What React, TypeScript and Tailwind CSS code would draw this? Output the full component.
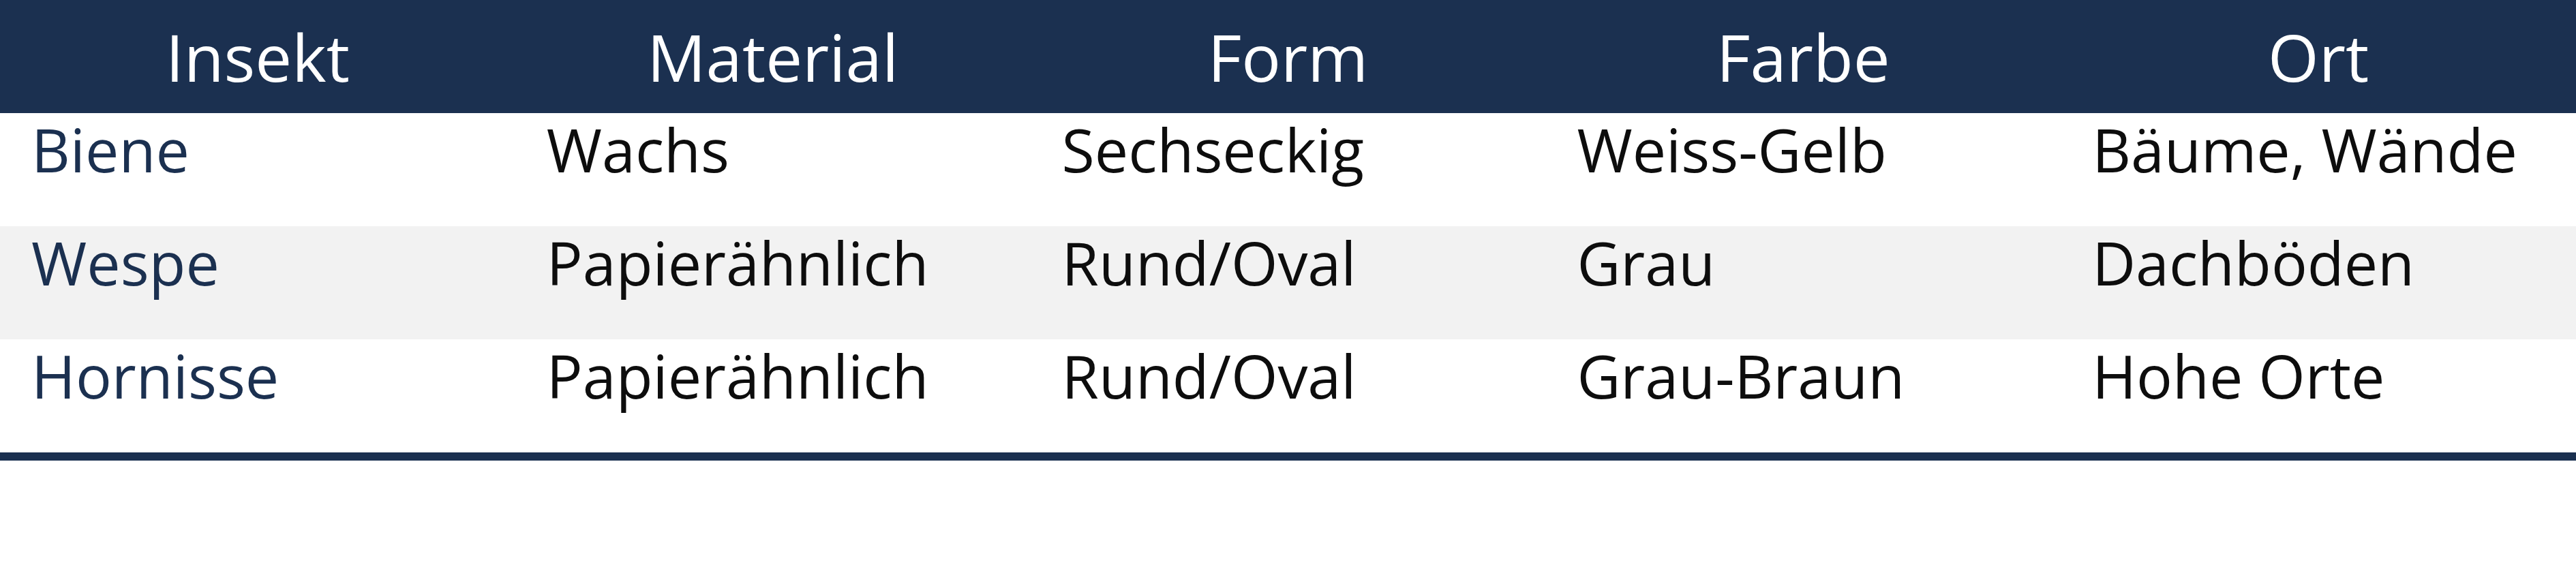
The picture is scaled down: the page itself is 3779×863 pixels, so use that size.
const headers = ['Insekt', 'Material', 'Form', 'Farbe', 'Ort'];

const rows = [
  ['Biene', 'Wachs', 'Sechseckig', 'Weiss-Gelb', 'Bäume, Wände'],
  ['Wespe', 'Papierähnlich', 'Rund/Oval', 'Grau', 'Dachböden'],
  ['Hornisse', 'Papierähnlich', 'Rund/Oval', 'Grau-Braun', 'Hohe Orte'],
];

export default function App() {
  return (
    <div className="min-h-screen w-full bg-white font-['Open_Sans',sans-serif]">
      <div className="w-full border-b-[12px] border-[#1b3050]">
        {/* header */}
        <div className="grid h-[166px] grid-cols-5 bg-[#1b3050]">
          {headers.map((h) => (
            <div key={h} className="flex items-center justify-center text-[96px] leading-none text-white">
              {h}
            </div>
          ))}
        </div>

        {rows.map((row, i) => (
          <div key={row[0]} className={`grid h-[166px] grid-cols-5 ${i === 1 ? 'bg-[#f2f2f2]' : 'bg-white'}`}>
            {row.map((cell, j) => (
              <div
                key={j}
                className={`whitespace-nowrap pl-[46px] pt-[9px] text-[88px] leading-none ${
                  j === 0 ? 'text-[#1b3050]' : 'text-[#0d0d0d]'
                }`}
              >
                {cell}
              </div>
            ))}
          </div>
        ))}
      </div>
    </div>
  );
}
